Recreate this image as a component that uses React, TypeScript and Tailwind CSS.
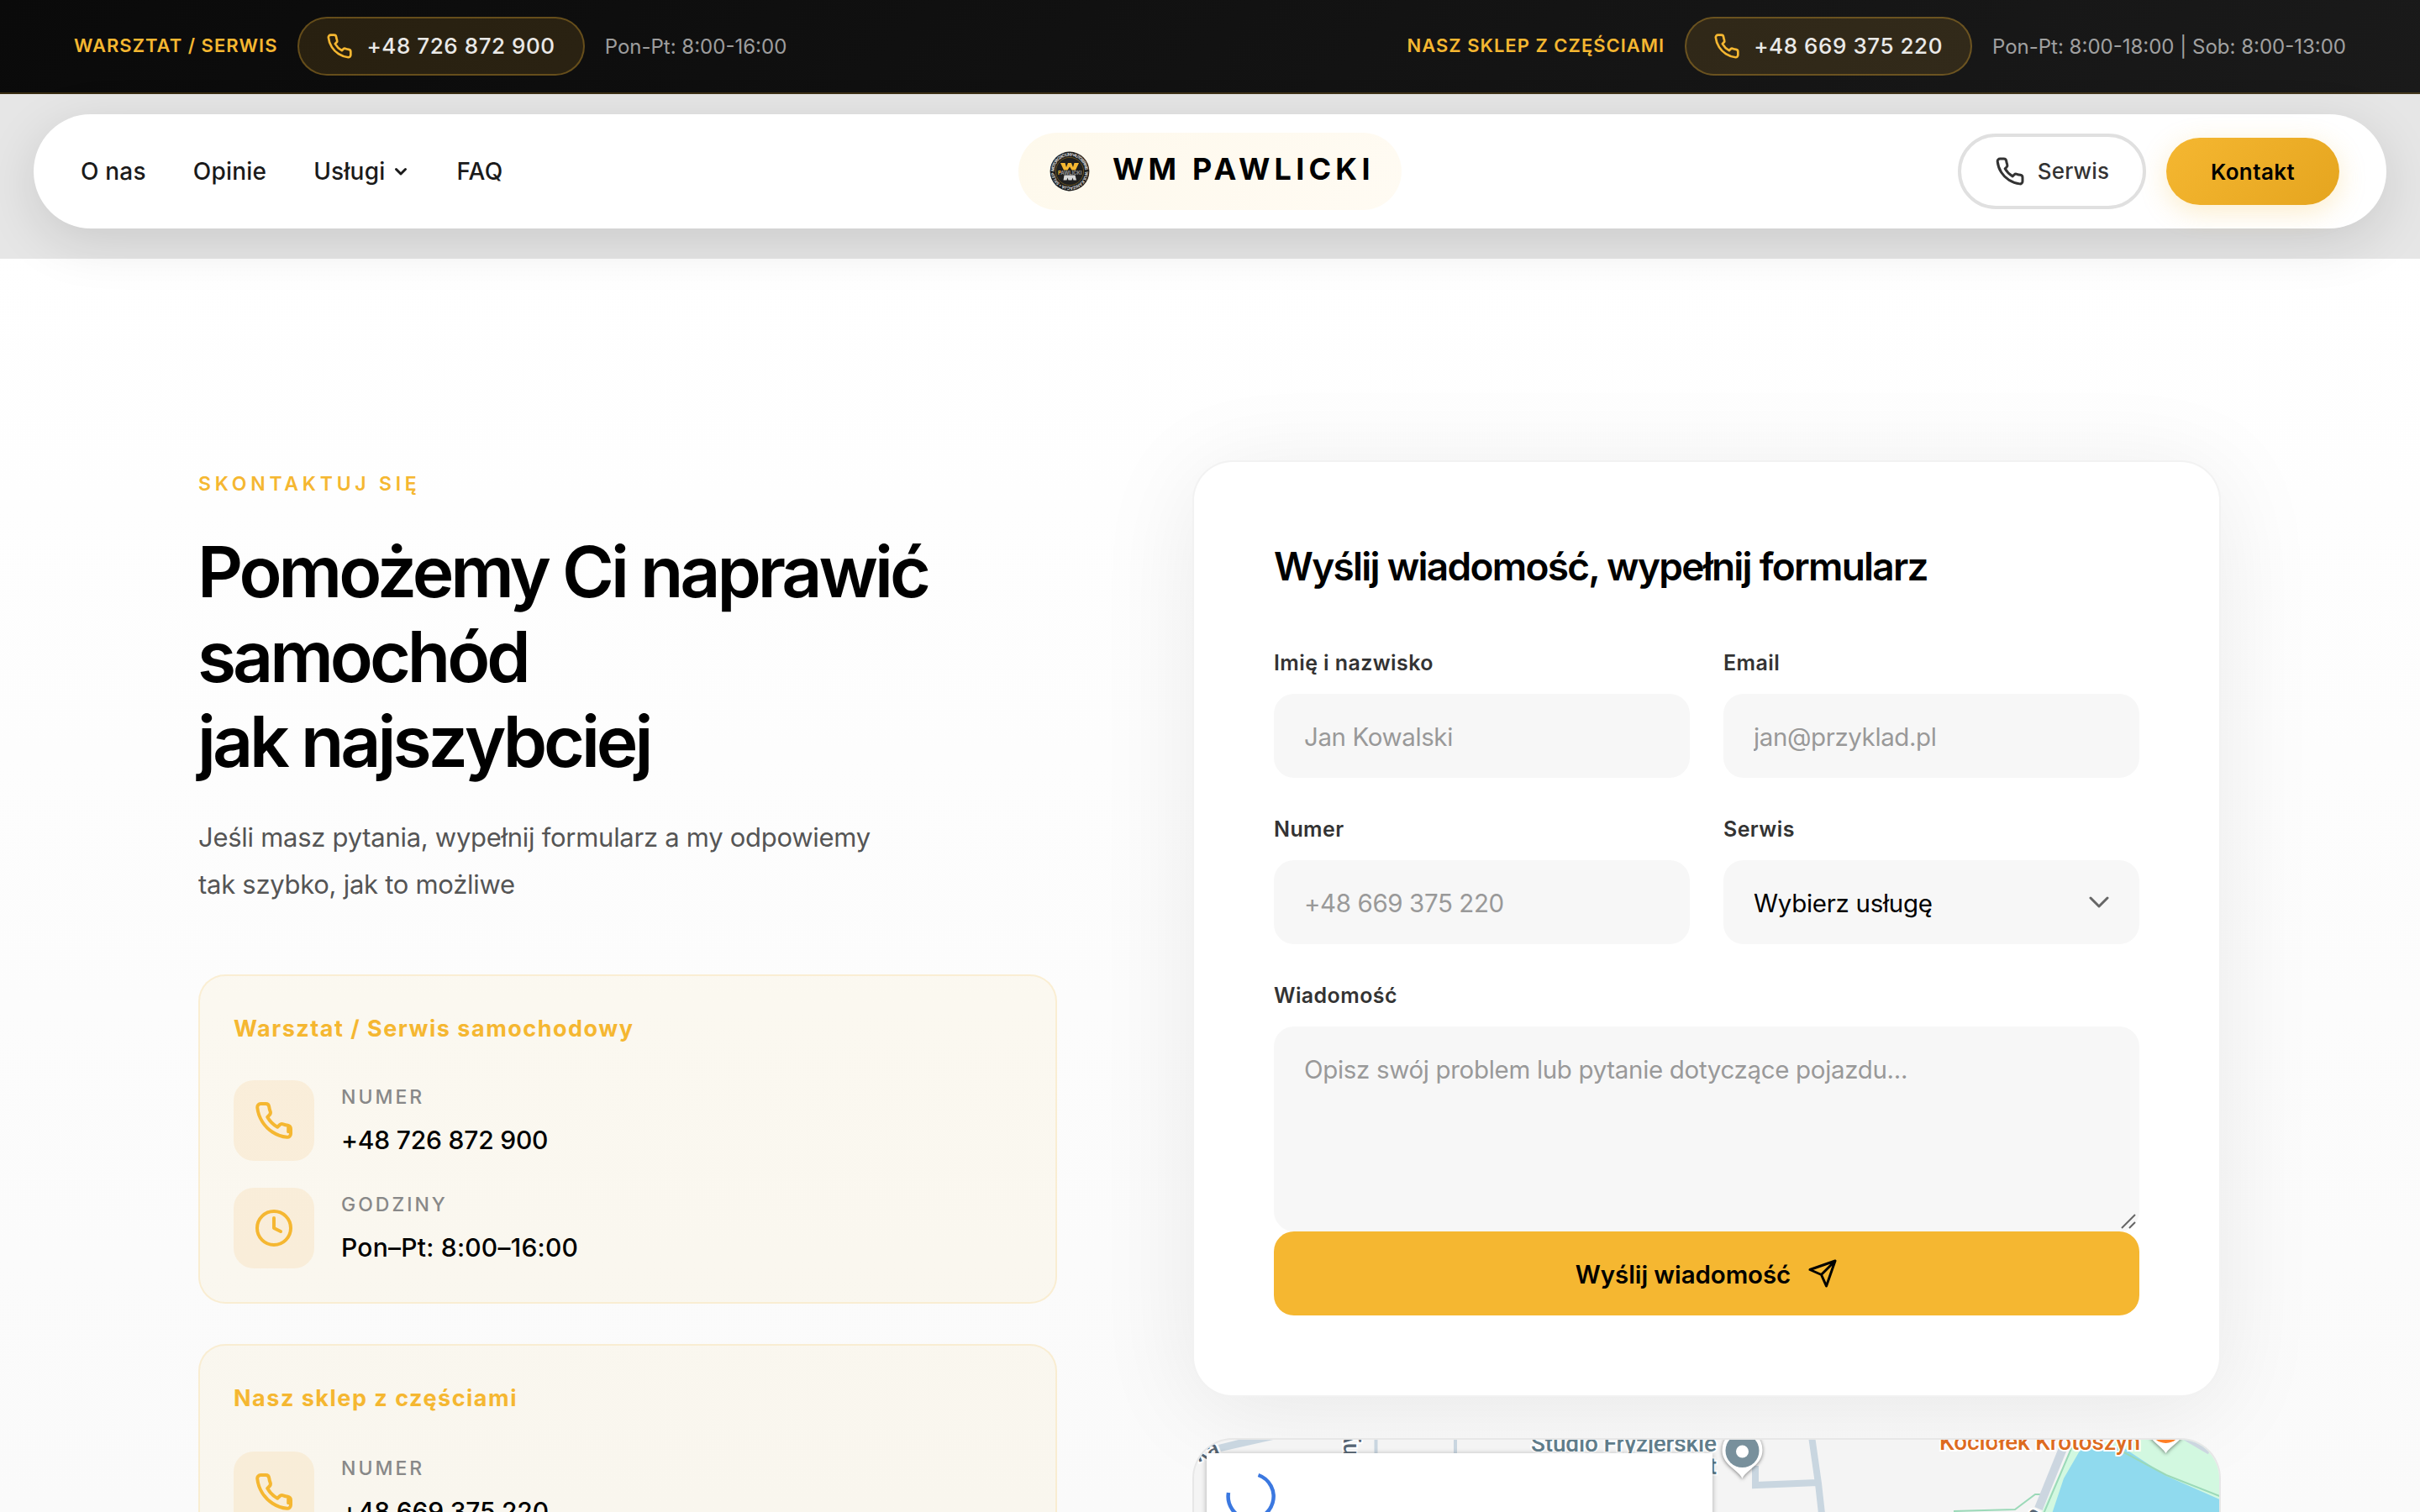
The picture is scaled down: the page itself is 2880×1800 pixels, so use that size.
import type { ReactNode } from "react";

type iconProps = { className?: string; smudge?: boolean };

type contactRow = {
  label: string;
  value: string;
  valueStyle: string;
  icon: "phone" | "clock";
};

type contactCard = {
  title: string;
  titleStyle: string;
  rows: contactRow[];
};

const contacts: contactCard[] = [
  {
    title: "Warsztat / Serwis samochodowy",
    titleStyle: "h-[84px]",
    rows: [
      { label: "NUMER", value: "+48 726 872 900", valueStyle: "tracking-[-0.200px]", icon: "phone" },
      { label: "GODZINY", value: "Pon–Pt: 8:00–16:00", valueStyle: "tracking-[0.250px]", icon: "clock" },
    ],
  },
  {
    title: "Nasz sklep z częściami",
    titleStyle: "h-[86px]",
    rows: [
      { label: "NUMER", value: "+48 669 375 220", valueStyle: "tracking-[-0.200px]", icon: "phone" },
      { label: "GODZINY", value: "Pon–Pt: 8:00–18:00", valueStyle: "tracking-[0.250px]", icon: "clock" },
    ],
  },
];

const PhoneIcon = ({ className, smudge }: iconProps) => (
  <svg
    className={className}
    viewBox="0 0 24 24"
    fill="none"
    stroke="currentColor"
    strokeWidth="2"
    strokeLinecap="round"
    strokeLinejoin="round"
  >
    <path d="M22 16.92v3a2 2 0 0 1-2.18 2 19.79 19.79 0 0 1-8.63-3.07 19.5 19.5 0 0 1-6-6 19.79 19.79 0 0 1-3.07-8.67A2 2 0 0 1 4.11 2h3a2 2 0 0 1 2 1.72 12.84 12.84 0 0 0 .7 2.81 2 2 0 0 1-.45 2.11L8.09 9.91a16 16 0 0 0 6 6l1.27-1.27a2 2 0 0 1 2.11-.45 12.84 12.84 0 0 0 2.81.7A2 2 0 0 1 22 16.92z" />
    {smudge && <path d="M20.6 16v2.600" />}
  </svg>
);

const ClockIcon = ({ className }: iconProps) => (
  <svg
    className={className}
    viewBox="0 0 24 24"
    fill="none"
    stroke="currentColor"
    strokeWidth="2"
    strokeLinecap="round"
    strokeLinejoin="round"
  >
    <circle cx="12" cy="12" r="10" />
    <polyline points="12 6 12 12 16 14" />
  </svg>
);

const Logo = () => (
  <svg className="h-[48px] w-[48px]" viewBox="0 0 48 48">
    <defs>
      <path id="ringTop" d="M5.6 24a18.4 18.4 0 0 1 36.8 0" />
      <path id="ringBottom" d="M42.4 24a18.4 18.4 0 0 1-36.8 0" />
    </defs>
    <circle cx="24" cy="24" r="23.4" fill="#1f1f1f" />
    <circle cx="24" cy="24" r="16.6" fill="none" stroke="#7a5f22" strokeWidth="0.8" />
    <text fontFamily="Inter, sans-serif" fontSize="5" fontWeight="700" fill="#cfcfcf">
      <textPath href="#ringTop" textLength="56">MOTORYZACYJNY • AUTOSERWIS</textPath>
    </text>
    <text fontFamily="Inter, sans-serif" fontSize="5" fontWeight="700" fill="#cfcfcf">
      <textPath href="#ringBottom" textLength="56">WULKANIZACJA • SKLEP</textPath>
    </text>
    <path d="M13 14h5.500l1.500 5 2-5h4l2 5 1.500-5H35l-4 8.500h-4.500l-2.500-4-2.500 4H17z" fill="#f5b731" />
    <path d="M17.500 28.500h13l1.500 6h-3.500l-1-3-1 3h-4l-1-3-1 3H16.500z" fill="#d4d4d4" />
    <text x="10" y="27.600" fontFamily="Inter, sans-serif" fontSize="6" fontWeight="700" fill="#8f8f8f" textLength="28.500">
      <tspan fill="#f5b731">P</tspan>AWLICKI
    </text>
  </svg>
);

const TopLabel = ({ children }: { children: ReactNode }) => (
  <span className="-mt-[2px] text-[22px] font-semibold tracking-[1px] text-[#f5b731]">{children}</span>
);

const PhonePill = ({ number }: { number: string }) => (
  <a className="flex h-[70px] items-center gap-[16px] rounded-full border-2 border-[#f5b731]/30 bg-[#f5b731]/[0.12] pr-[33px] pl-[32px] text-white/90">
    <PhoneIcon className="h-[32px] w-[32px] text-[#f5b731]" />
    <span className="-mt-px text-[26px] font-medium tracking-[0.550px]">{number}</span>
  </a>
);

const TopBar = () => (
  <div className="flex h-[112px] items-center justify-between border-b-2 border-[#f5b731]/20 bg-[linear-gradient(135deg,#0a0a0a,#1a1a1a)] px-[88px]">
    <div className="flex items-center gap-[24px]">
      <TopLabel>WARSZTAT / SERWIS</TopLabel>
      <PhonePill number="+48 726 872 900" />
      <span className="mt-px text-[24px] text-white/60">Pon-Pt: 8:00-16:00</span>
    </div>
    <div className="flex items-center gap-[24px]">
      <TopLabel>NASZ SKLEP Z CZĘŚCIAMI</TopLabel>
      <PhonePill number="+48 669 375 220" />
      <span className="mt-px text-[24px] text-white/60">Pon-Pt: 8:00-18:00 | Sob: 8:00-13:00</span>
    </div>
  </div>
);

const Navbar = () => (
  <div className="h-[196px] bg-[#e6e6e6] px-[40px] pt-[24px]">
    <nav className="grid h-[136px] grid-cols-[1fr_auto_1fr] items-center rounded-full bg-white px-[56px] shadow-[0_16px_64px_rgba(0,0,0,0.12)]">
      <ul className="flex items-center gap-[56px] text-[28px] font-medium tracking-[0.200px] text-[#1a1a1a]">
        <li>O nas</li>
        <li>Opinie</li>
        <li className="flex items-center gap-[9px]">
          Usługi
          <svg className="h-[20px] w-[20px]" viewBox="0 0 20 20" fill="none" stroke="currentColor" strokeWidth="3" strokeLinecap="round" strokeLinejoin="round">
            <path d="M4.500 7.500L10 13l5.500-5.500" />
          </svg>
        </li>
        <li>FAQ</li>
      </ul>
      <a className="flex h-[92px] w-[456px] items-center gap-[27px] rounded-full bg-[linear-gradient(135deg,#fef9ec,#fffbf3)] pl-[37px]">
        <Logo />
        <span className="-mt-[6px] text-[36px] font-bold tracking-[5.200px] whitespace-nowrap text-black">WM PAWLICKI</span>
      </a>
      <div className="flex items-center justify-end gap-[24px]">
        <button className="flex h-[90px] w-[224px] items-center justify-center gap-[15px] rounded-full border-4 border-[#e0e0e0] text-[26px] font-medium tracking-[0.200px] text-[#333]">
          <PhoneIcon className="h-[36px] w-[36px]" />
          <span className="-mt-[2px]">Serwis</span>
        </button>
        <button className="h-[80px] w-[206px] rounded-full bg-[linear-gradient(135deg,#f5b731,#e5a51f)] text-[26px] font-semibold tracking-[0.400px] text-black shadow-[0_8px_32px_rgba(245,183,49,0.25)]">
          Kontakt
        </button>
      </div>
    </nav>
  </div>
);

const ContactCard = ({ title, titleStyle, rows }: contactCard) => (
  <div className="h-[392px] rounded-[32px] border-2 border-[#f5b731]/15 bg-[#f5b731]/[0.06] px-[40px] pt-[40px]">
    <h3 className={`text-[27px] leading-[45px] font-bold tracking-[1.500px] text-[#f5b731] ${titleStyle}`}>{title}</h3>
    <div className="flex flex-col gap-[32px]">
      {rows.map((row, index) => {
        return (
          <div key={index} className="flex items-center gap-[32px]">
            <div className="flex h-[96px] w-[96px] items-center justify-center rounded-[24px] bg-[#f5a731]/[0.11] text-[#f5b731]">
              {row.icon == "phone" ? <PhoneIcon className="h-[48px] w-[48px]" smudge /> : <ClockIcon className="h-[48px] w-[48px]" />}
            </div>
            <div>
              <p className="text-[23px] leading-[40px] font-medium tracking-[3px] text-[#888]">{row.label}</p>
              <p className={`mt-[7px] mb-px text-[30px] leading-[48px] font-medium text-black ${row.valueStyle}`}>{row.value}</p>
            </div>
          </div>
        );
      })}
    </div>
  </div>
);

const inputStyle =
  "h-[100px] w-full rounded-[24px] bg-[#f7f7f7] px-[36px] pt-[2px] text-[29.500px] tracking-[-0.400px] text-black outline-none placeholder:text-[#999]";

const Field = ({ label, children }: { label: string; children: ReactNode }) => (
  <label className="block">
    <span className="block h-[54px] text-[25px] leading-[34px] font-semibold tracking-[0.400px] text-[#333]">{label}</span>
    {children}
  </label>
);

const ContactForm = () => (
  <form className="h-[1115px] rounded-[48px] border-2 border-black/[0.05] bg-white pt-[94px] pr-[95px] pl-[95px] shadow-[0_16px_120px_rgba(0,0,0,0.08)]">
    <h2 className="text-[46px] leading-[60px] font-semibold tracking-[-1.750px] text-black">Wyślij wiadomość, wypełnij formularz</h2>
    <div className="mt-[68px] grid grid-cols-2 gap-x-[40px] gap-y-[44px]">
      <Field label="Imię i nazwisko">
        <input className={inputStyle} placeholder="Jan Kowalski" />
      </Field>
      <Field label="Email">
        <input className={inputStyle} placeholder="jan@przyklad.pl" />
      </Field>
      <Field label="Numer">
        <input className={inputStyle} placeholder="+48 669 375 220" />
      </Field>
      <Field label="Serwis">
        <div className="flex h-[100px] items-center justify-between rounded-[24px] bg-[#f7f7f7] px-[36px] pt-[2px] text-[29.500px] tracking-[-0.300px] text-black">
          Wybierz usługę
          <svg className="-mt-[2px] h-[24px] w-[24px]" viewBox="0 0 24 24" fill="none" stroke="#666" strokeWidth="3" strokeLinecap="round" strokeLinejoin="round">
            <path d="M2 7l10 10L22 7" />
          </svg>
        </div>
      </Field>
    </div>
    <div className="mt-[44px]">
      <Field label="Wiadomość">
        <textarea
          className="block h-[244px] w-full resize-none rounded-[24px] bg-[#f7f7f7] px-[36px] pt-[27px] text-[29.500px] leading-[48px] tracking-[-0.330px] outline-none placeholder:text-[#999]"
          placeholder="Opisz swój problem lub pytanie dotyczące pojazdu..."
        />
        <div className="relative">
          <svg className="absolute right-[4px] bottom-[3px] h-[18px] w-[18px]" viewBox="0 0 18 18" stroke="#666" strokeWidth="2">
            <path d="M1 17L17 1M10 17L17 10" />
          </svg>
        </div>
      </Field>
    </div>
    <button type="button" className="flex h-[100px] w-full items-center justify-center gap-[20px] rounded-[24px] bg-[#f5b731] text-[29.500px] font-semibold tracking-[-0.100px] text-black">
      <span className="mt-[2px]">Wyślij wiadomość</span>
      <svg className="h-[36px] w-[36px]" viewBox="0 0 24 24" fill="none" stroke="currentColor" strokeWidth="2" strokeLinecap="round" strokeLinejoin="round">
        <path d="M22 2L11 13M22 2l-7 20-4-9-9-4 20-7z" />
      </svg>
    </button>
  </form>
);

const MapPreview = () => (
  <div className="mt-[49px] h-[600px] overflow-hidden rounded-[48px] border-2 border-black/[0.05] bg-[#f4f4f4]">
    <svg className="block h-[86px] w-full" viewBox="1421 1714 1220 86" fontFamily="Roboto, sans-serif">
      {/* roads */}
      <path d="M1450 1720L1482 1712L1524 1712L1453 1728z" fill="#c9d6e0" />
      <path d="M1637.500 1712V1732M1732 1712V1732" stroke="#c9d6e0" strokeWidth="4" />
      <path d="M2156 1710L2164 1766L2168 1802M2089 1745V1768L2163 1765" fill="none" stroke="#c9d6e0" strokeWidth="8" />
      {/* park and lake */}
      <path d="M2466 1722L2545 1712H2644V1800H2430z" fill="#d2f8e0" />
      <path d="M2478 1722H2525L2578 1757L2644 1786V1802H2442L2456 1760z" fill="#90daee" />
      <path d="M2524 1727L2578 1756L2644 1782M2466 1722L2432 1802M2325 1799L2398 1797L2422 1779H2436" fill="none" stroke="#9bd9b8" strokeWidth="2" />
      <path d="M2456 1722L2426 1796" stroke="#ccd6e0" strokeWidth="10" />
      <path d="M2600 1712L2629 1729" stroke="#ccd6e0" strokeWidth="5" />
      <path d="M2626 1712L2644 1756V1712z" fill="#f4f4f4" />
      <g fontSize="27" fontWeight="500" fill="#566573" stroke="#fff" strokeWidth="4" paintOrder="stroke">
        <text transform="translate(1426 1741) rotate(-22)">ka</text>
        <text transform="translate(1614 1733) rotate(-90)">ny</text>
        <text transform="translate(2424 1814) rotate(-60)">a</text>
      </g>
      <g fontSize="28" fontWeight="500" fill="#607d8b" stroke="#fff" strokeWidth="4" paintOrder="stroke">
        <text x="1822" y="1728" textLength="221">Studio Fryzjerskie</text>
        <text x="2043" y="1755" textAnchor="end">t</text>
      </g>
      <text x="2308" y="1726" textLength="239" fontSize="28" fontWeight="500" fill="#dd6b20" stroke="#fff" strokeWidth="4" paintOrder="stroke">
        Kociołek Krotoszyn
      </text>
      {/* pins */}
      <path d="M2073.500 1760C2067 1748 2049.500 1744 2049.500 1726A24 24 0 0 1 2097.500 1726C2097.500 1744 2080 1748 2073.500 1760z" fill="#fff" className="drop-shadow-[0_1px_2px_rgba(0,0,0,0.5)]" />
      <circle cx="2073.500" cy="1727" r="20" fill="#78909c" />
      <circle cx="2073.500" cy="1728" r="7.500" fill="#fff" />
      <path d="M2577.500 1730C2571 1720 2555 1714 2555 1698H2601C2601 1714 2584 1720 2577.500 1730z" fill="#fff" className="drop-shadow-[0_1px_2px_rgba(0,0,0,0.5)]" />
      <circle cx="2577.500" cy="1699" r="19" fill="#ff7f27" />
      {/* info window still loading */}
      <rect x="1436" y="1730" width="602" height="90" fill="#fff" className="drop-shadow-[0_1px_3px_rgba(0,0,0,0.3)]" />
      <path d="M1462 1777A27 27 0 1 0 1497.500 1756" fill="none" stroke="#3b78e0" strokeWidth="4.500" />
    </svg>
  </div>
);

const App = () => {
  return (
    <div className="h-[1800px] w-[2880px] overflow-hidden bg-[linear-gradient(180deg,#ffffff_300px,#fafafa_1800px)] font-['Inter','Noto_Sans',sans-serif]">
      <header>
        <TopBar />
        <Navbar />
      </header>
      <main className="flex items-start justify-between pt-[240px] pr-[237px] pl-[236px]">
        <section className="w-[1022px] pt-[10px]">
          <p className="text-[23px] leading-[36px] font-semibold tracking-[4.750px] text-[#f5b731]">SKONTAKTUJ SIĘ</p>
          <h1 className="mt-[36px] -ml-px text-[84px] leading-[101px] font-semibold tracking-[-4.050px] text-black">
            Pomożemy Ci naprawić
            <br />
            samochód
            <br />
            jak najszybciej
          </h1>
          <p className="mt-[36px] text-[31px] leading-[56px] tracking-[-0.280px] text-[#555]">
            Jeśli masz pytania, wypełnij formularz a my odpowiemy
            <br />
            tak szybko, jak to możliwe
          </p>
          <div className="mt-[79px] flex flex-col gap-[48px]">
            {contacts.map((item, index) => {
              return <ContactCard key={index} title={item.title} titleStyle={item.titleStyle} rows={item.rows} />;
            })}
          </div>
        </section>
        <section className="w-[1224px]">
          <ContactForm />
          <MapPreview />
        </section>
      </main>
    </div>
  );
};

export default App;
